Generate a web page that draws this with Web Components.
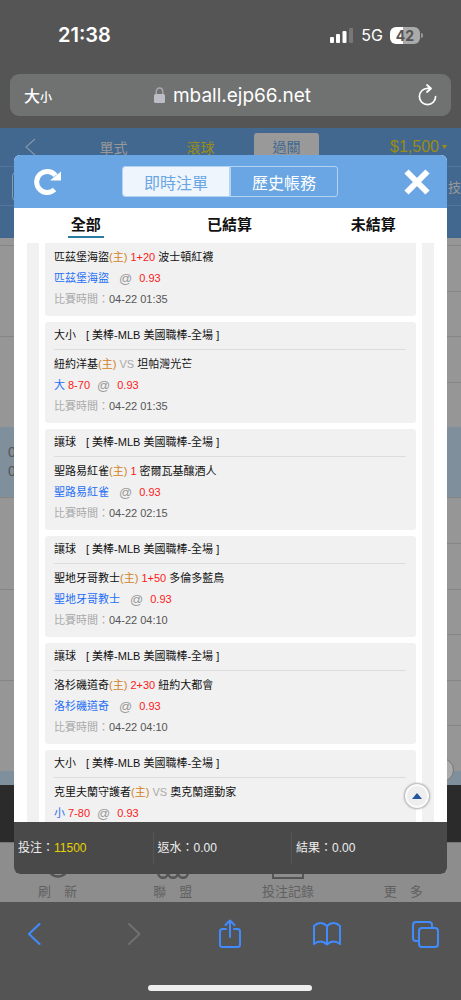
<!DOCTYPE html>
<html lang="zh-Hant">
<head>
<meta charset="utf-8">
<meta name="viewport" content="width=device-width, initial-scale=1">
<title>即時注單</title>
<style>
html, body { margin: 0; height: 100%; }
body { background: #555; font-family: "Liberation Sans", "Noto Sans CJK TC", sans-serif; font-size: 11px; color: #222; }
</style>
</head>
<body>
<phone-screen>
  <status-bar slot="top" time="21:38" battery="42"></status-bar>
  <address-bar slot="top">mball.ejp66.net</address-bar>
  <site-page>
    <bet-dialog>
      <bet-card home="匹茲堡海盜" line="1+20" away="波士頓紅襪" pick="匹茲堡海盜" time="04-22 01:35"></bet-card>
      <bet-card kind="大小" home="紐約洋基" away="坦帕灣光芒" pick="大" total="8-70" time="04-22 01:35"></bet-card>
      <bet-card kind="讓球" home="聖路易紅雀" line="1" away="密爾瓦基釀酒人" pick="聖路易紅雀" time="04-22 02:15"></bet-card>
      <bet-card kind="讓球" home="聖地牙哥教士" line="1+50" away="多倫多藍鳥" pick="聖地牙哥教士" time="04-22 04:10"></bet-card>
      <bet-card kind="讓球" home="洛杉磯道奇" line="2+30" away="紐約大都會" pick="洛杉磯道奇" time="04-22 04:10"></bet-card>
      <bet-card kind="大小" home="克里夫蘭守護者" away="奧克蘭運動家" pick="小" total="7-80"></bet-card>
    </bet-dialog>
  </site-page>
  <browser-toolbar slot="bottom"></browser-toolbar>
</phone-screen>

<script>
const reset = `:host,*{box-sizing:border-box}button{font:inherit;color:inherit;background:none;border:0;padding:0;margin:0}a{color:inherit;text-decoration:none}svg{display:block}`;
function define(name, render, ready) {
  customElements.define(name, class extends HTMLElement {
    constructor() {
      super();
      this.attachShadow({ mode: "open" });
    }
    connectedCallback() {
      this.shadowRoot.innerHTML = `<style>${reset}</style>` + render(this);
      if (ready) ready(this.shadowRoot);
    }
  });
}

define("phone-screen", () => `
<style>
:host{display:flex;flex-direction:column;height:100vh;min-height:700px;overflow:hidden}
main{flex:1;min-height:0;display:flex;flex-direction:column}
</style>
<slot name="top"></slot><main><slot></slot></main><slot name="bottom"></slot>`);

define("status-bar", el => `
<style>
:host{display:flex;justify-content:space-between;align-items:center;height:70px;padding:0 38px 0 58px;color:#fff;font-family:Inter,sans-serif;flex:none}
time{font-size:20px;font-weight:600}
div{display:flex;align-items:center}
.net{font-size:16px;margin:0 7px 0 8px}
.bat{width:30px;height:17px;border-radius:6px;background:linear-gradient(90deg,#fff 42%,#aaa 42%);color:#555;font-size:14px;font-weight:700;justify-content:center}
i{width:2px;height:5px;border-radius:0 2px 2px 0;background:#999;margin-left:1px}
</style>
<time>${el.getAttribute("time")}</time>
<div>
<svg width="23" height="15" viewBox="0 0 23 15" fill="#fff"><rect y="9" width="4" height="6" rx="1"/><rect x="6" y="6" width="4" height="9" rx="1"/><rect x="12.5" y="3" width="4" height="12" rx="1"/><rect x="19" width="4" height="15" rx="1" fill="#777"/></svg>
<span class="net">5G</span><div class="bat">${el.getAttribute("battery")}</div><i></i>
</div>`);

define("address-bar", () => `
<style>
:host{display:block;flex:none;padding:4px 10px 12px}
nav{display:grid;grid-template-columns:60px 1fr 56px;align-items:center;height:42px;padding:0 14px;border-radius:9px;background:#707171;color:#fff}
.size{text-align:left;font:500 12px "Noto Sans CJK TC",sans-serif}
.size b{font-size:16px;font-weight:500}
.url{display:flex;justify-content:center;align-items:center;gap:8px;font:19px Inter,sans-serif}
.re{justify-self:end}
</style>
<nav><button class="size" aria-label="文字大小"><b>大</b>小</button>
<button class="url"><svg width="11" height="16" viewBox="0 0 11 16"><rect y="7" width="11" height="9" rx="1.5" fill="#bebdc5"/><path d="M2.3 7V4.2a3.2 3.2 0 0 1 6.4 0V7" fill="none" stroke="#aaa9b1" stroke-width="1.4"/></svg><span><slot></slot></span></button>
<button class="re" aria-label="重新載入"><svg width="19" height="23" viewBox="0 0 19 23" fill="none" stroke="#fff" stroke-width="1.7" stroke-linecap="round" stroke-linejoin="round"><path d="M17.6 12.5a8.1 8.1 0 1 1-8.1-8.1h3.2M9 1l4 3.5L9 8"/></svg></button></nav>`);

define("site-page", () => `
<style>
:host{display:flex;flex-direction:column;flex:1;min-height:0;position:relative;background:#969696;color:#989898}
header{background:#426890;height:110px;flex:none}
.row{display:flex;align-items:center;height:39px;border-bottom:1px solid #53769a}
.types{padding:0 14px 0 25px;font-size:14px}
.types .back{width:45px}
.types a{flex:1;text-align:center}
.types a.sel{flex:none;width:65px;height:33px;align-self:flex-end;line-height:28px;background:#999;color:#426890;border-radius:3px 3px 0 0;margin:0 10px}
.types .gold{color:#9b8c12}
.types .cash{display:flex;flex:none;align-items:center;justify-content:flex-end;gap:3px;width:118px;font-size:16px}
.games{justify-content:space-between;padding:0 0 0 12px;font-size:13px}
.games span{width:24px;height:29px;border:1px solid #899aae;border-radius:4px}
.board{flex:1;display:flex;flex-direction:column;padding-top:7px;min-height:0}
.pair{flex:1;display:grid;grid-template-columns:1fr 1fr;grid-template-rows:1fr 1fr}
.pair i{border-top:1px solid #858585}
.pair i:first-child{grid-row:span 2}
.live{height:70px;background:#808f9c;color:#555;font-size:14px;line-height:19px;padding:16px 8px;flex:none}
.live.cut{height:14px;padding:0}
.black{height:57px;background:#2b2b2b;flex:none}
footer{display:grid;grid-template-columns:repeat(4,1fr);height:60px;flex:none;background:#8d8d8d;color:#606060;border-top:1px solid #757575;font-size:13px}
footer a{display:flex;flex-direction:column;align-items:center;justify-content:flex-end;gap:3px;line-height:20px;white-space:pre}
.pin{position:absolute;right:7px;bottom:120px;width:24px;height:24px;border-radius:50%;background:#aaa;border:1px solid #777}
</style>
<header>
<div class="row types"><button class="back" aria-label="返回"><svg width="11" height="18" viewBox="0 0 11 18" fill="none" stroke="#8294a8" stroke-width="1.2"><path d="M10 1 1 9l9 8"/></svg></button><a href="#single">單式</a><a href="#live" class="gold">滾球</a><a href="#parlay" class="sel">過關</a><a href="#cash" class="gold cash">$1,500<svg width="5" height="4" viewBox="0 0 5 4" fill="#9b8c12"><path d="M0 0h5L2.500 4z"/></svg></a></div>
<div class="row games"><span></span><a href="#esports">技</a></div>
</header>
<div class="board"><div class="pair"><i></i><i></i><i></i></div><div class="pair"><i></i><i></i><i></i></div><div class="live">0<br>0</div><div class="pair"><i></i><i></i><i></i></div><div class="pair"><i></i><i></i><i></i></div><div class="pair"><i></i><i></i><i></i></div><div class="live cut"></div></div>
<div class="black"></div>
<footer>
<a href="#refresh"><svg width="26" height="26" viewBox="0 0 26 26" fill="none" stroke="#555" stroke-width="2.5"><circle cx="13" cy="13" r="10.5"/></svg>刷　新</a>
<a href="#league"><svg width="32" height="26" viewBox="0 0 32 26" fill="none" stroke="#555" stroke-width="2.5"><circle cx="6" cy="20" r="4.8"/><circle cx="16" cy="20" r="4.8"/><circle cx="26" cy="20" r="4.8"/></svg>聯　盟</a>
<a href="#records"><svg width="32" height="28" viewBox="0 0 32 28" fill="none" stroke="#555" stroke-width="2"><path d="M1 1h30v26H1z"/></svg>投注記錄</a>
<a href="#more">更　多</a></footer>
<button class="pin" aria-label="置頂"></button>
<slot></slot>`);

define("bet-dialog", () => `
<style>
:host{position:absolute;inset:27px 14px 28px;display:flex;flex-direction:column;background:#fff;border-radius:6px;overflow:hidden;color:#111}
header{display:flex;align-items:center;justify-content:space-between;height:53px;flex:none;background:#69a6e3;padding:0 17px 0 20px}
.seg{display:flex;width:216px;height:31px;margin-right:5px;border:1px solid #b4d2f1;border-radius:3px;overflow:hidden;font-size:16px;color:#fff}
.seg button{flex:1}
.seg .on{background:#eff5fd;color:#69a6e3;border-right:2px solid #b4d2f1}
nav{display:grid;grid-template-columns:repeat(3,1fr);justify-items:center;align-items:start;height:35px;flex:none;font-size:15px;font-weight:700;padding:5px 2px 0 0}
nav button{line-height:23px;height:25px;padding:0 3px;border-bottom:2px solid transparent}
nav .on{border-color:#2b7aa0}
.scroll{flex:1;min-height:0;overflow-y:auto;scrollbar-width:none;padding:0 13px}
.frame{background:#f1f1f1;padding:0 12px}
.list{background:#fff;padding:0 6px;display:flex;flex-direction:column;gap:6px}
.sum{display:grid;grid-template-columns:32% 32% 1fr;align-items:center;height:52px;flex:none;background:#494949;color:#eee;font-size:12px}
.sum span{padding-left:4px;line-height:32px}
.sum span+span{border-left:1px solid #555}
.sum b{font-weight:400;color:#e6d200}
.up{position:absolute;right:18px;bottom:66px;width:24px;height:24px;border-radius:50%;background:#eee;border:2px solid #fafafa;box-shadow:0 0 2px 1px #aaa;display:grid;place-items:center}
</style>
<header>
<button aria-label="重新整理"><svg width="27" height="28" viewBox="0 0 27 28"><path d="M21.500 7.600A10.500 10.500 0 1 0 20.500 21.500" fill="none" stroke="#fff" stroke-width="5"/><path d="M27 3.500v9H16z" fill="#fff"/></svg></button>
<div class="seg"><button class="on">即時注單</button><button>歷史帳務</button></div>
<button aria-label="關閉"><svg width="26" height="26" viewBox="0 0 26 26" stroke="#fff" stroke-width="6"><path d="M2.500 2.500l21 21M23.500 2.500l-21 21"/></svg></button>
</header>
<nav><button class="on">全部</button><button>已結算</button><button>未結算</button></nav>
<div class="scroll"><div class="frame"><div class="list"><slot></slot></div></div></div>
<div class="sum"><span>投注：<b>11500</b></span><span>返水：0.00</span><span>結果：0.00</span></div>
<button class="up" aria-label="回到頂部"><svg width="10" height="6" viewBox="0 0 10 6" fill="#2456a0"><path d="M5 0l5 6H0z"/></svg></button>`,
root => requestAnimationFrame(() => { root.querySelector(".scroll").scrollTop = 28; }));

define("bet-card", el => {
  const a = name => el.getAttribute(name);
  const line = a("line") ? `<em>${a("line")}</em>` : `<s>VS</s>`;
  const total = a("total") ? `<em>${a("total")}</em>` : "";
  const head = a("kind") ? `<span>${a("kind")}</span><span>[ 美棒-MLB 美國職棒-全場 ]</span>` : "";
  const time = a("time") ? `<s>比賽時間：</s><time>${a("time")}</time>` : "";
  return `
<style>
:host{display:block;flex:none;background:#f1f1f1;border-radius:3px;padding:0 10px 6px 9px;font-size:11px;line-height:21px;white-space:nowrap}
h3{display:flex;gap:10px;height:28px;margin:0 0 4px;font-size:11px;font-weight:400;line-height:27px;border-bottom:1px solid #dcdcdc}
p{margin:0;height:21px}
em{font-style:normal;color:#fb1a1a}
s{text-decoration:none;color:#aaa}
.host{color:#d2821e}
.pick{display:flex;align-items:center}
.pick b{font-weight:400;color:#1f6ff5;margin-right:3px}
.at{font-size:13px;color:#999;padding:0 7px}
time{color:#555}
</style>
<h3>${head}</h3>
<p>${a("home")}<span class="host">(主)</span> ${line} ${a("away")}</p>
<p class="pick"><b>${a("pick")}</b>${total}<span class="at">@</span><em>0.93</em></p>
<p>${time}</p>`;
});

define("browser-toolbar", () => `
<style>
:host{display:flex;flex-direction:column;justify-content:space-between;height:98px;flex:none;background:#545454;padding:17px 21px 9px 19px}
nav{display:flex;justify-content:space-between}
button{width:30px;height:30px;display:grid;place-items:center}
.home{align-self:center;width:164px;height:6px;border-radius:3px;background:#eee}
svg{fill:none;stroke:#408cff;stroke-width:2;stroke-linecap:round;stroke-linejoin:round}
</style>
<nav>
<button aria-label="上一頁"><svg width="14" height="22" viewBox="0 0 14 22"><path d="M12.500 1 2 11l10.500 10"/></svg></button>
<button aria-label="下一頁" disabled><svg width="18" height="22" viewBox="0 0 18 22" style="stroke:#707070"><path d="M6 1 16.500 11 6 21"/></svg></button>
<button aria-label="分享"><svg width="24" height="30" viewBox="0 0 24 30"><path d="M8 10H4.500Q2 10 2 12.500v13Q2 28 4.500 28h15q2.500 0 2.500-2.500v-13Q22 10 19.500 10H16M12 18V2M7.500 6 12 1.500 16.500 6"/></svg></button>
<button aria-label="書籤"><svg width="28" height="24" viewBox="0 0 28 24"><path d="M14 4Q11 1 7.500 1T1 4v18q3-2.500 6.500-2.500T14 22.500q3-3 6.500-3T27 22V4q-3-3-6.500-3T14 4zv18"/></svg></button>
<button aria-label="分頁"><svg width="27" height="27" viewBox="0 0 27 27"><path d="M6.500 20H4q-3 0-3-3V4q0-3 3-3h13q3 0 3 3v2.500"/><rect x="7" y="7" width="19" height="19" rx="3"/></svg></button>
</nav>
<div class="home"></div>`);
</script>
</body>
</html>
